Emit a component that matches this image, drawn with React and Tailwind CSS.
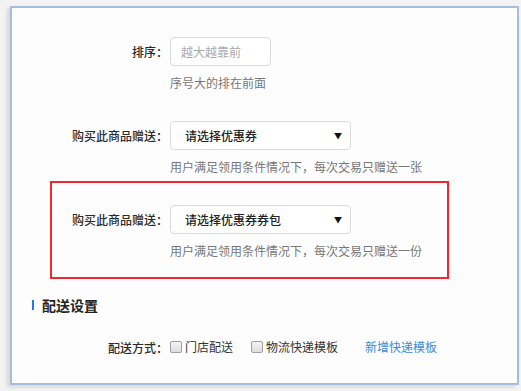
const font = { fontFamily: '"Noto Sans CJK SC", "Noto Sans", sans-serif' };

function Label({ width, children }) {
  return (
    <div
      className="shrink-0 text-right text-[12px] font-medium leading-[17px] text-[#2b2b2b]"
      style={{ width }}
    >
      {children}
    </div>
  );
}

function SelectBox({ value }) {
  return (
    <div className="ml-[2px] flex h-[29px] w-[181px] items-center justify-between rounded-[4px] border border-[#dcdcdc] bg-white pl-[14px] pr-[8px]">
      <span className="text-[12px] font-medium text-[#222]">{value}</span>
      <span className="text-[8px] leading-none text-[#111]">▼</span>
    </div>
  );
}

function Help({ indent, children }) {
  return (
    <div className="mt-[8px] text-[12px] leading-[17px] text-[#777]" style={{ paddingLeft: indent }}>
      {children}
    </div>
  );
}

function Check({ label }) {
  return (
    <label className="flex items-center gap-[3px]">
      <span className="h-[12px] w-[12px] rounded-[2px] border border-[#a0a0a0] bg-gradient-to-b from-[#f4f4f4] to-[#dedede]" />
      <span className="text-[12px] text-[#333]">{label}</span>
    </label>
  );
}

export default function App() {
  return (
    <div className="h-[391px] w-[521px] bg-[#f3f3f3] pl-[10px] pt-[6px]" style={font}>
      <div className="box-border h-[379px] w-[509px] border-2 border-[#a6bedc] bg-[#fdfdfd] shadow-[-3px_2px_4px_rgba(0,0,0,0.12)]">
        <div className="mt-[29px] flex items-center">
          <Label width={156}>排序：</Label>
          <div className="ml-[2px] flex h-[29px] w-[101px] items-center rounded-[4px] border border-[#dcdcdc] bg-white px-[10px] text-[12px] text-[#aaa]">
            越大越靠前
          </div>
        </div>
        <Help indent={158}>序号大的排在前面</Help>

        <div className="mt-[30px] flex items-center">
          <Label width={156}>购买此商品赠送：</Label>
          <SelectBox value="请选择优惠券" />
        </div>
        <Help indent={158}>用户满足领用条件情况下，每次交易只赠送一张</Help>

        <div className="ml-[38px] mt-[6px] box-border h-[98px] w-[399px] border-2 border-[#f1272b] pt-[22px]">
          <div className="flex items-center">
            <Label width={116}>购买此商品赠送：</Label>
            <SelectBox value="请选择优惠券券包" />
          </div>
          <Help indent={118}>用户满足领用条件情况下，每次交易只赠送一份</Help>
        </div>

        <div className="ml-[20px] mt-[16px] flex h-[20px] items-center gap-[8px]">
          <span className="h-[10px] w-[2px] bg-[#2a76f0]" />
          <span className="text-[14px] font-bold text-[#222]">配送设置</span>
        </div>

        <div className="mt-[22px] flex h-[20px] items-center">
          <Label width={156}>配送方式：</Label>
          <div className="ml-[2px] flex items-center">
            <Check label="门店配送" />
            <div className="ml-[18px]">
              <Check label="物流快递模板" />
            </div>
            <a className="ml-[27px] text-[12px] text-[#3f8ad8]">新增快递模板</a>
          </div>
        </div>
      </div>
    </div>
  );
}
